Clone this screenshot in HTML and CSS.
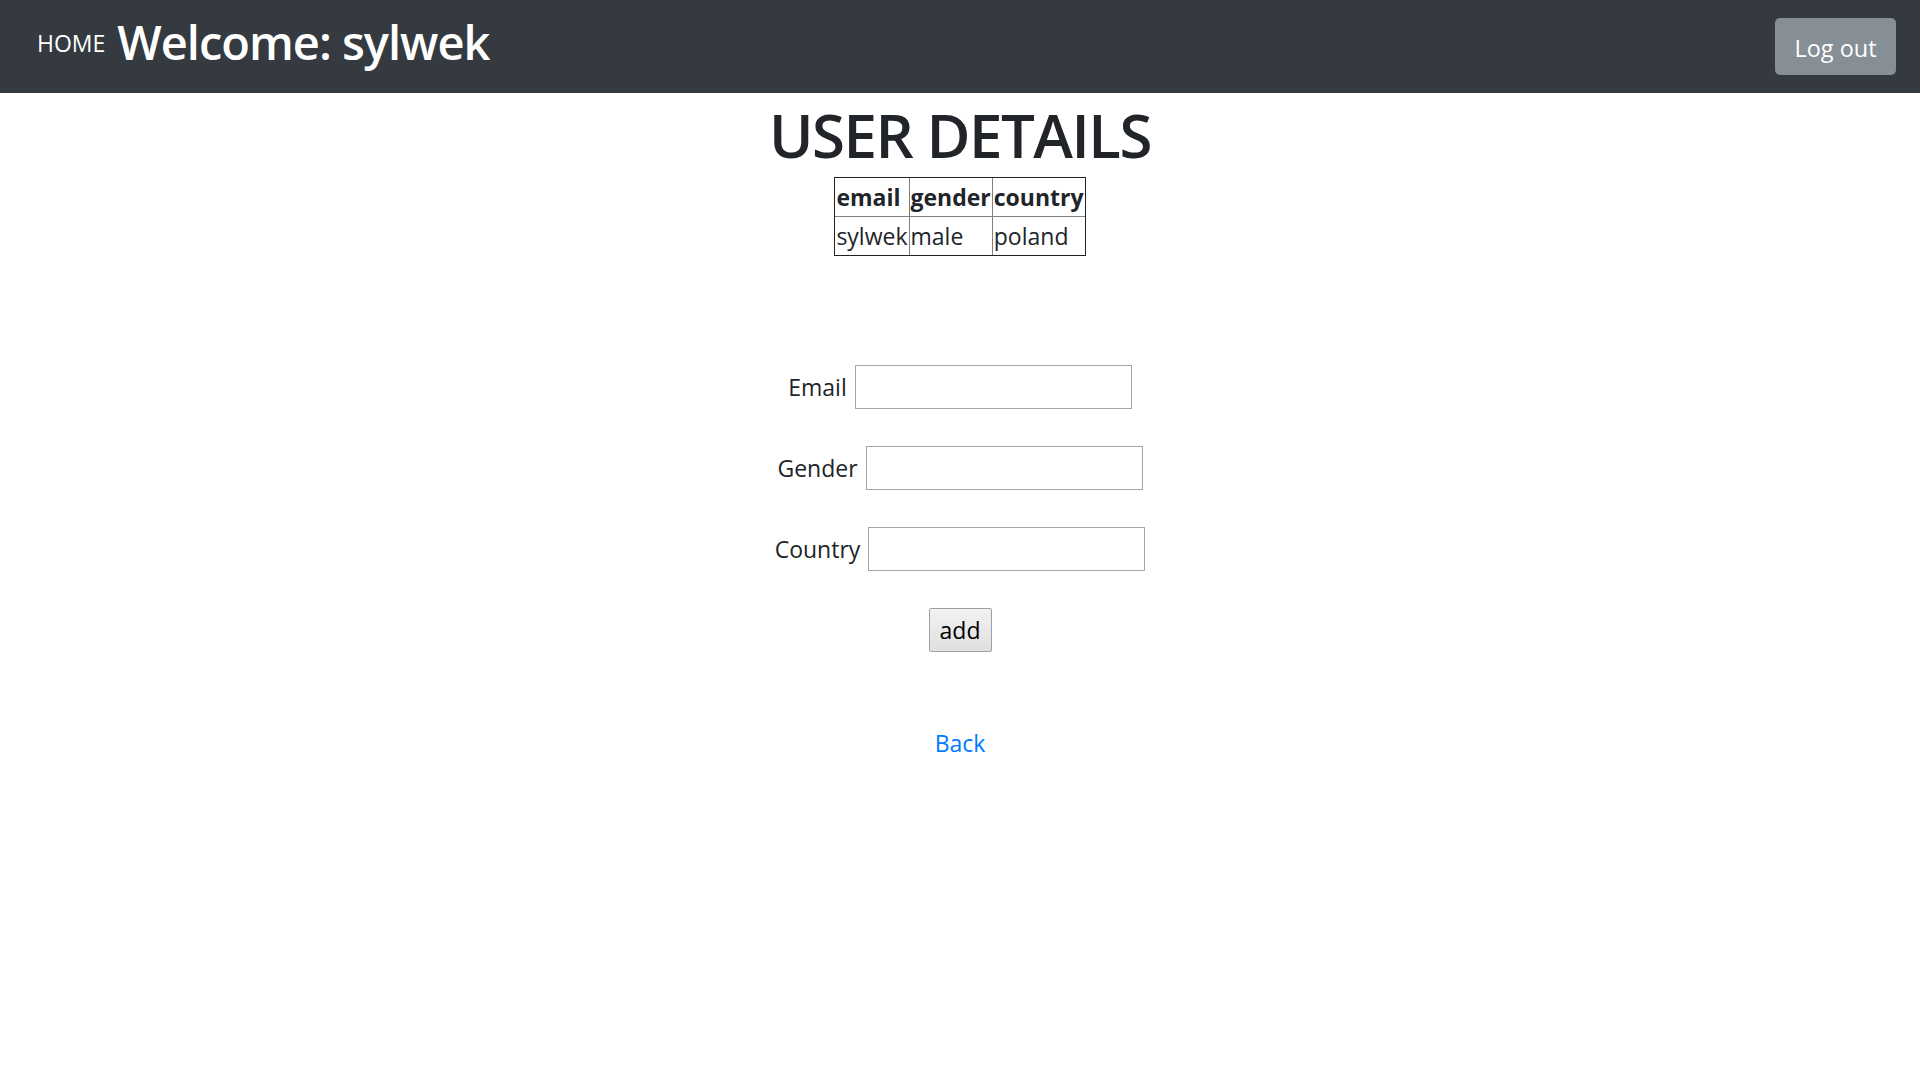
FILE: index.html
```html
<!DOCTYPE html>
<html>
<head>
<meta charset="utf-8">
<title>User details</title>
<link rel="stylesheet" href="styles.css">
</head>
<body>
<nav class="navbar">
  <div class="brand">
    <a class="home" href="#">HOME</a>
    <h1 class="welcome">Welcome: sylwek</h1>
  </div>
  <button class="logout">Log out</button>
</nav>
<main class="content">
  <h2 class="title">USER DETAILS</h2>
  <table class="details">
    <tr><th>email</th><th>gender</th><th>country</th></tr>
    <tr><td>sylwek</td><td>male</td><td>poland</td></tr>
  </table>
  <form class="form">
    <div class="row"><label>Email</label><input type="text"></div>
    <div class="row"><label>Gender</label><input type="text"></div>
    <div class="row"><label>Country</label><input type="text"></div>
    <div class="row"><button type="button" class="add">add</button></div>
  </form>
  <a class="back" href="#">Back</a>
</main>
</body>
</html>
```

FILE: styles.css
```css
* { box-sizing: border-box; }
html, body { margin: 0; padding: 0; }
body {
  font-family: "Open Sans", "Noto Sans", sans-serif;
  font-size: 23px;
  line-height: 1.5;
  color: #212529;
  background: #fff;
}
.navbar {
  height: 93px;
  background: #343a40;
  display: flex;
  align-items: flex-start;
  justify-content: space-between;
  padding: 0 24px 0 37px;
}
.brand { display: flex; align-items: flex-start; gap: 12px; }
.home {
  color: #fff;
  text-decoration: none;
  font-size: 23px;
  line-height: 34px;
  margin-top: 26px;
}
.welcome {
  margin: 14px 0 0;
  color: #fff;
  font-size: 47px;
  font-weight: 600;
  line-height: 56px;
  letter-spacing: -1px;
}
.logout {
  background: #868e96;
  color: #fff;
  border: none;
  border-radius: 5px;
  width: 121px;
  height: 57px;
  margin-top: 18px;
  font-family: inherit;
  font-size: 23.5px;
  padding: 3px 0 0;
}
.content {
  display: flex;
  flex-direction: column;
  align-items: center;
}
.title {
  margin: 0;
  font-size: 60px;
  font-weight: 600;
  line-height: 84px;
  letter-spacing: -1.5px;
}
.details {
  border-collapse: separate;
  border-spacing: 0;
  border: 1px solid #222;
}
.details th, .details td {
  border-right: 1px solid #808080;
  border-bottom: 1px solid #808080;
  padding: 1px 1px;
  text-align: left;
  line-height: 36px;
  font-size: 23px;
}
.details th:last-child, .details td:last-child { border-right: none; }
.details tr:last-child td { border-bottom: none; }
.details th { font-weight: 700; }
.form {
  margin-top: 109px;
  display: flex;
  flex-direction: column;
  gap: 37px;
}
.row {
  display: flex;
  justify-content: center;
  align-items: center;
  gap: 8px;
}
.row label { font-size: 23px; }
.row input {
  width: 277px;
  height: 44px;
  border: 1px solid #a5a5a5;
  font-size: 23px;
}
.add {
  width: 63px;
  height: 44px;
  border: 1px solid #a0a0a0;
  border-radius: 2px;
  background: linear-gradient(#f2f2f2, #e0e0e0);
  font-family: inherit;
  font-size: 23px;
  color: #000;
  padding: 0;
}
.back {
  margin-top: 74px;
  color: #007bff;
  text-decoration: none;
  font-size: 23px;
  line-height: 34.5px;
}
```
